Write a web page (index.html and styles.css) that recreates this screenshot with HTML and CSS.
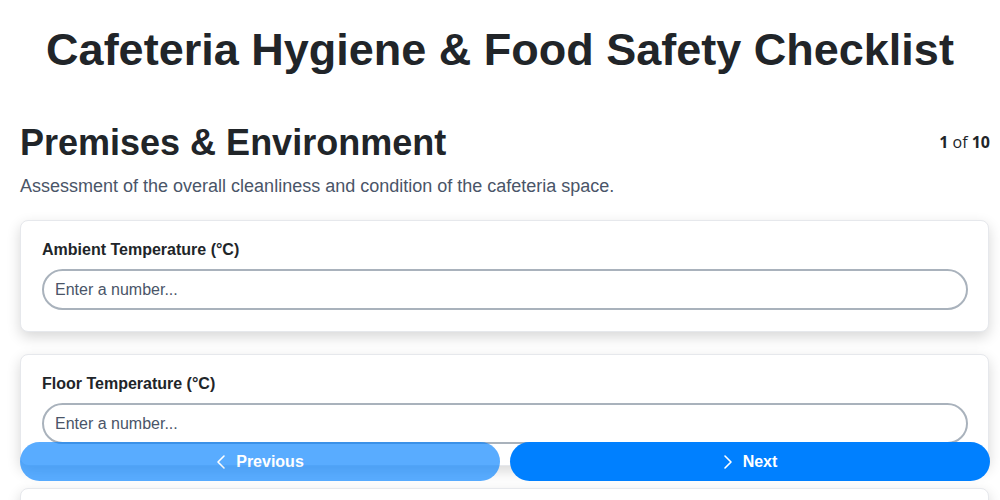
FILE: index.html
```html
<!DOCTYPE html>
<html lang="en">

<head>
    <meta charset="UTF-8">
    <meta name="viewport" content="width=device-width, initial-scale=1.0">
    <title>Cafeteria Hygiene &amp; Food Safety Checklist</title>
    <link rel="stylesheet" href="styles.css">
</head>

<body>
    <h1 class="page-title">Cafeteria Hygiene &amp; Food Safety Checklist</h1>

    <main class="checklist">
        <div class="section-header">
            <h2 class="section-title">Premises &amp; Environment</h2>
            <span class="step-counter"><strong>1</strong> of <strong>10</strong></span>
        </div>
        <p class="section-description">Assessment of the overall cleanliness and condition of the cafeteria space.</p>

        <div class="field-card">
            <label for="ambient-temp">Ambient Temperature (°C)</label>
            <input type="number" id="ambient-temp" placeholder="Enter a number...">
        </div>

        <div class="field-card">
            <label for="floor-temp">Floor Temperature (°C)</label>
            <input type="number" id="floor-temp" placeholder="Enter a number...">
        </div>

        <div class="field-card">
            <label for="humidity">Relative Humidity (%)</label>
            <input type="number" id="humidity" placeholder="Enter a number...">
        </div>
    </main>

    <!-- Navegação fixa no rodapé -->
    <nav class="step-nav">
        <button type="button" class="btn btn-prev" disabled>
            <svg class="chevron" viewBox="0 0 10 16" aria-hidden="true"><path d="M8 2 2 8l6 6"/></svg>
            Previous
        </button>
        <button type="button" class="btn btn-next">
            <svg class="chevron" viewBox="0 0 10 16" aria-hidden="true"><path d="M2 2l6 6-6 6"/></svg>
            Next
        </button>
    </nav>
</body>

</html>
```

FILE: styles.css
```css
:root {
    --primary-color: #0080ff;
    --text-color: #212529;
    --muted-color: #4a5568;
    --border-color: #e6e8ec;
    --input-border: #a9b2bc;
    --shadow-color: rgba(0, 0, 0, 0.16);
    --font-family: "Liberation Sans", Arial, sans-serif;
}

* {
    box-sizing: border-box;
}

body {
    font-family: var(--font-family);
    color: var(--text-color);
    background-color: #ffffff;
    margin: 0;
}

.page-title {
    font-size: 45px;
    line-height: 52px;
    font-weight: bold;
    text-align: center;
    margin: 24px 0 46px;
}

.checklist {
    padding: 0 11px 0 20px;
}

.section-header {
    display: flex;
    justify-content: space-between;
    align-items: center;
    margin-right: -1px;
}

.section-title {
    font-size: 36px;
    line-height: 42px;
    font-weight: bold;
    margin: 0;
}

.step-counter {
    font-family: "Open Sans", sans-serif;
    font-size: 16px;
    margin-top: -3px;
}

.section-description {
    font-size: 18px;
    line-height: 21px;
    color: var(--muted-color);
    margin: 12px 0 23px;
}

.field-card {
    background-color: #fff;
    border: 1px solid var(--border-color);
    border-radius: 8px;
    box-shadow: 0 5px 14px var(--shadow-color);
    padding: 19px 20px 21px 21px;
    margin-bottom: 22px;
}

.field-card label {
    display: block;
    font-size: 16px;
    line-height: 20px;
    font-weight: bold;
    margin-bottom: 9px;
}

.field-card input {
    display: block;
    width: 100%;
    height: 41px;
    padding: 0 11px;
    font-family: var(--font-family);
    font-size: 16px;
    color: var(--text-color);
    border: 2px solid var(--input-border);
    border-radius: 999px;
    background-color: #fff;
    outline: none;
}

.field-card input::placeholder {
    color: var(--muted-color);
}

.step-nav {
    position: fixed;
    left: 20px;
    right: 10px;
    bottom: 19px;
    display: flex;
    gap: 10px;
}

.btn {
    flex: 1;
    height: 39px;
    display: flex;
    align-items: center;
    justify-content: center;
    gap: 10px;
    background-color: var(--primary-color);
    color: #fff;
    font-family: var(--font-family);
    font-size: 16px;
    font-weight: bold;
    border: none;
    border-radius: 999px;
    cursor: pointer;
}

.btn:disabled {
    opacity: 0.65;
    cursor: default;
}

.chevron {
    width: 10px;
    height: 16px;
    fill: none;
    stroke: #fff;
    stroke-width: 1.6;
    stroke-linecap: round;
    stroke-linejoin: round;
}
```
